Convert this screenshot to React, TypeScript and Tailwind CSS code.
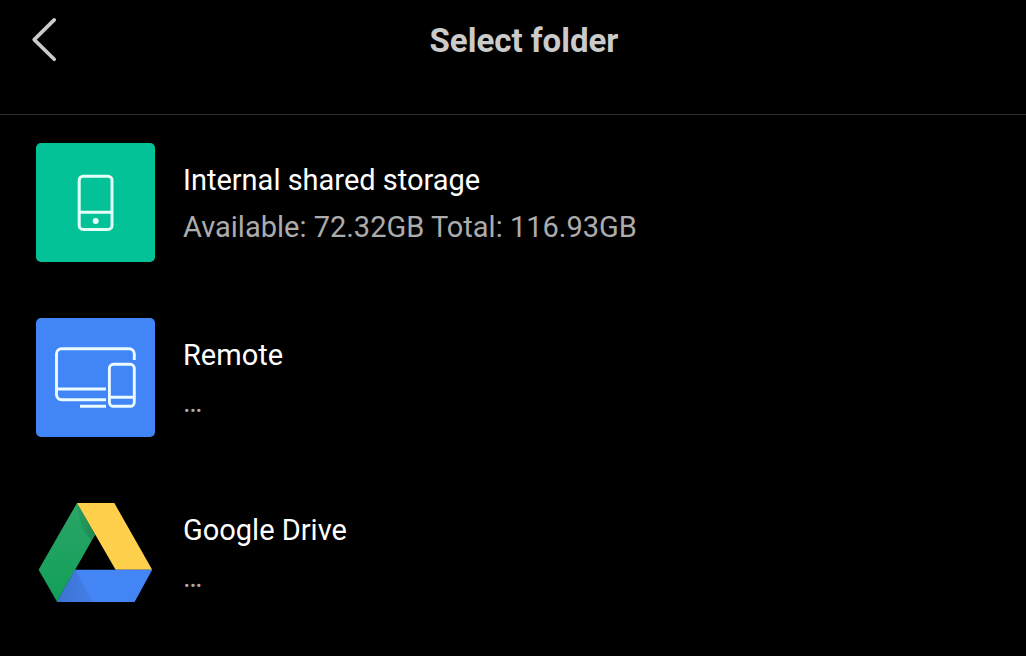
import type { ReactNode } from "react";

const PhoneIcon = () => (
  <svg
    viewBox="0 0 119 119"
    className="h-full w-full"
    fill="none"
    stroke="#e4fff8"
    strokeWidth="3"
    aria-hidden="true"
  >
    <rect x="43.2" y="33.2" width="32.8" height="53.2" rx="4" />
    <path d="M43.2 69.2H76" />
    <circle cx="59.7" cy="78" r="3" fill="#e4fff8" stroke="none" />
  </svg>
);

const DevicesIcon = () => (
  <svg
    viewBox="0 0 119 119"
    className="h-full w-full"
    fill="none"
    stroke="#eafcff"
    strokeWidth="2.9"
    aria-hidden="true"
  >
    <path d="M98.3 42V35.7a5 5 0 0 0-5-5H25.5a5 5 0 0 0-5 5V76.7a5 5 0 0 0 5 5H70" />
    <path d="M20.5 71H70M44 88.3H70" />
    <rect x="73.4" y="46.3" width="24.9" height="42" rx="4" />
    <path d="M73.4 79.3H98.3" />
  </svg>
);

const DriveLogo = () => (
  <svg viewBox="0 0 119 119" className="h-full w-full" aria-hidden="true">
    <defs>
      <linearGradient id="green-side" x1="0" y1="0" x2="0" y2="1">
        <stop offset="0" stopColor="#2aa568" />
        <stop offset="1" stopColor="#129f59" />
      </linearGradient>
      <linearGradient id="green-fold" x1="1" y1="0" x2="0" y2="0">
        <stop offset="0" stopColor="#1c8a50" />
        <stop offset="1" stopColor="#239d60" />
      </linearGradient>
      <linearGradient id="blue-fold" x1="0" y1="0" x2="1" y2="0">
        <stop offset="0" stopColor="#3d72d2" />
        <stop offset="1" stopColor="#437fe9" />
      </linearGradient>
    </defs>
    <path d="M41 10L59 41.7L21 108.7L2.6 76.7Z" fill="url(#green-side)" />
    <path d="M41 10L59 41.7L55.5 47.6L45.5 35Z" fill="url(#green-fold)" />
    <path d="M41 10H78.3L116.2 76.7H79.6Z" fill="#ffd04b" />
    <path d="M39.2 76.7H116.2L98.6 108.9H21Z" fill="#4485f5" />
    <path d="M39.2 76.7L57 108.9H21Z" fill="url(#blue-fold)" />
  </svg>
);

type Location = {
  name: string;
  detail: string;
  tile: string;
  icon: ReactNode;
};

const locations: Location[] = [
  {
    name: "Internal shared storage",
    detail: "Available: 72.32GB Total: 116.93GB",
    tile: "bg-[#04c297]",
    icon: <PhoneIcon />,
  },
  {
    name: "Remote",
    detail: "…",
    tile: "bg-[#4285f6]",
    icon: <DevicesIcon />,
  },
  {
    name: "Google Drive",
    detail: "…",
    tile: "bg-transparent",
    icon: <DriveLogo />,
  },
];

export default function App() {
  return (
    <main className="min-h-dvh bg-black font-['Roboto',sans-serif] text-white">
      <header className="flex items-start border-b border-[#2b2b2b] pt-4 pr-[34px] pb-12 pl-8">
        <button
          type="button"
          aria-label="Back"
          className="flex h-[50px] w-6 items-center justify-center"
        >
          <svg
            viewBox="0 0 24 46"
            className="h-[46px] w-6"
            fill="none"
            stroke="#cbcbcb"
            strokeWidth="3.6"
            strokeLinecap="round"
            strokeLinejoin="round"
            aria-hidden="true"
          >
            <path d="M22.2 1.9L2.2 21.6L22.2 41.3" />
          </svg>
        </button>
        <h1 className="flex-1 text-center text-[33px] leading-[50px] font-bold text-[#cbcbcb]">
          Select folder
        </h1>
      </header>

      <ul>
        {locations.map(({ name, detail, tile, icon }) => (
          <li key={name}>
            <button
              type="button"
              className="flex w-full items-center gap-7 px-9 py-7 text-left"
            >
              <span className={`size-[119px] shrink-0 overflow-hidden rounded-[5px] ${tile}`}>
                {icon}
              </span>
              <span className="flex min-w-0 flex-1 flex-col pt-0.5 text-[29px] leading-[47px]">
                <span>{name}</span>
                <span className="text-[#acacac]">{detail}</span>
              </span>
            </button>
          </li>
        ))}
      </ul>
    </main>
  );
}
